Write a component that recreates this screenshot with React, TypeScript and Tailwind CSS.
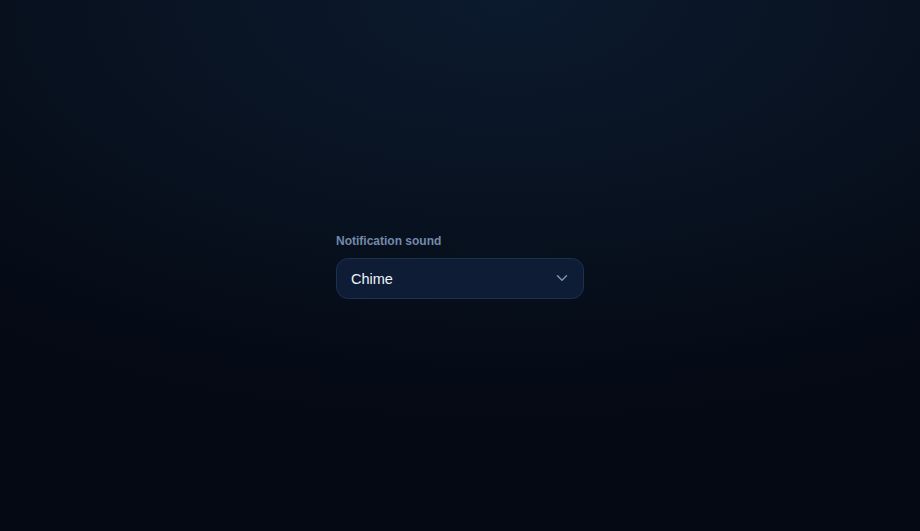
import React from "react";

export default function App() {
  return (
    <div
      className="w-full h-[531px] flex items-center justify-center bg-[radial-gradient(ellipse_90%_80%_at_55%_0%,#0c1a2e_0%,#08111f_55%,#040913_100%)]"
      style={{ fontFamily: "'Liberation Sans', Arial, sans-serif" }}
    >
      <div className="flex flex-col gap-[9px] w-[248px]">
        <label className="text-[12px] font-bold leading-4 text-[#7489ab]">
          Notification sound
        </label>
        <button className="h-[41px] w-full flex items-center justify-between rounded-xl border border-[#1d3050] bg-[#0e1d35] pl-[14px] pr-[12px] text-left">
          <span className="text-[14.5px] leading-5 pt-[1px] text-[#eef3fa]">Chime</span>
          <svg width="18" height="18" viewBox="0 0 24 24" fill="none" stroke="#7b90b2" strokeWidth="2" strokeLinecap="round" strokeLinejoin="round">
            <path d="m6 9 6 6 6-6" />
          </svg>
        </button>
      </div>
    </div>
  );
}
